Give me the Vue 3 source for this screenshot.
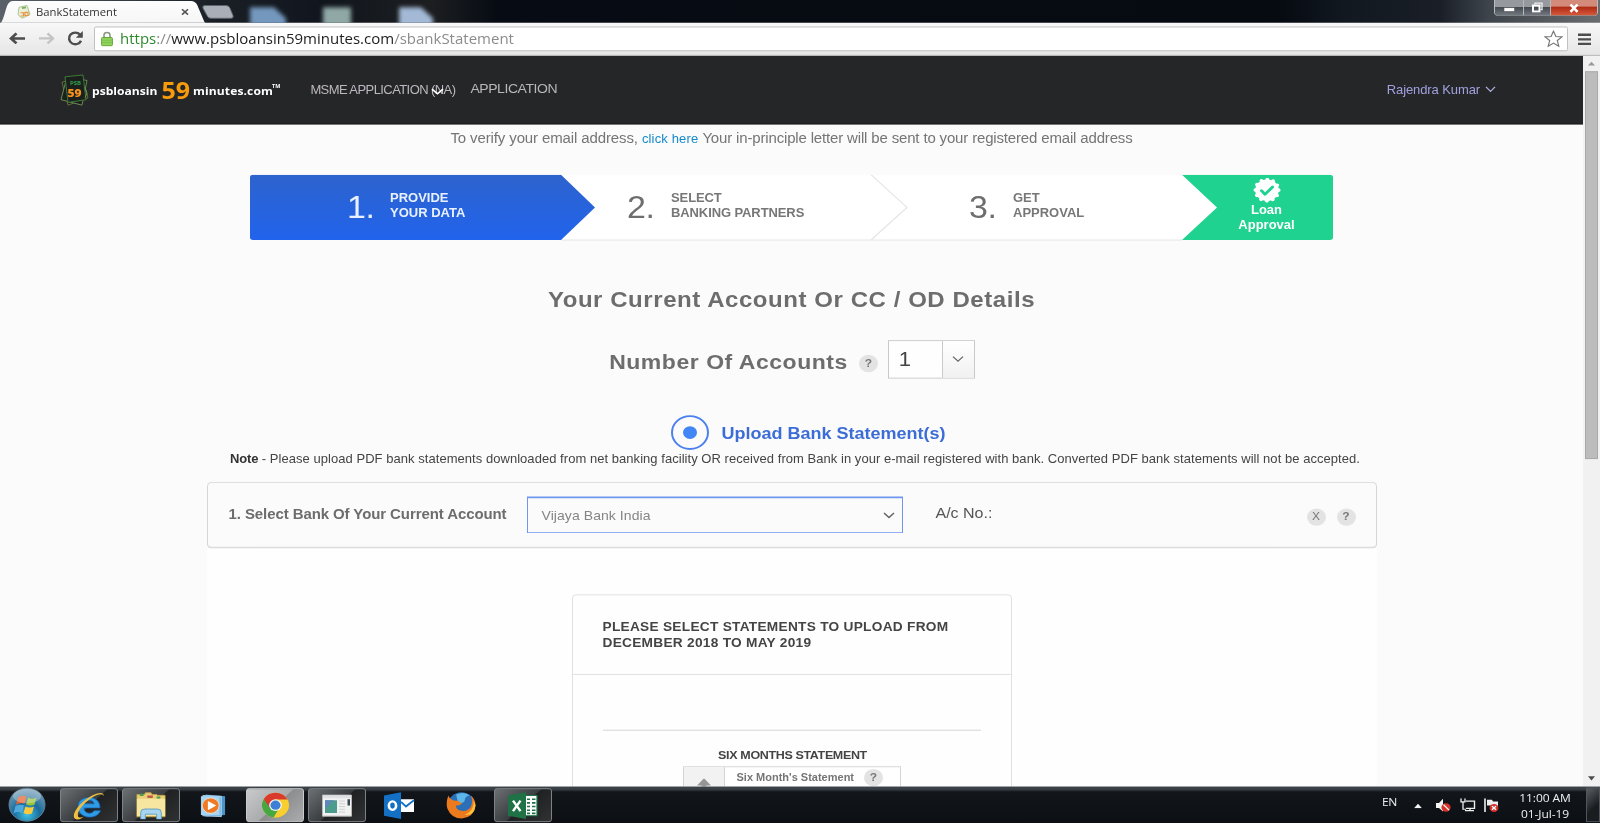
<script setup>
const pageTitle = 'BankStatement'
const note = '- Please upload PDF bank statements downloaded from net banking facility OR received from Bank in your e-mail registered with bank. Converted PDF bank statements will not be accepted.'
</script>

<template>
  <div class="screen">
    <div class="desktop">
      <header class="tabstrip">
        <svg class="strip-bg" width="1600" height="26" viewBox="0 0 1600 26">
          <defs>
            <linearGradient id="glass" x1="0" x2="1">
              <stop offset="0" stop-color="#5b6168" />
              <stop offset="0.13" stop-color="#1b2027" />
              <stop offset="0.2" stop-color="#11161e" />
              <stop offset="0.27" stop-color="#1c1e20" />
              <stop offset="0.31" stop-color="#070c14" />
              <stop offset="0.8" stop-color="#060b12" />
              <stop offset="0.84" stop-color="#121820" />
              <stop offset="0.9" stop-color="#1a1f27" />
              <stop offset="0.93" stop-color="#3e444b" />
              <stop offset="1" stop-color="#6a6d70" />
            </linearGradient>
            <linearGradient id="tabfill" x1="0" x2="0" y1="0" y2="1">
              <stop offset="0" stop-color="#fdfdfd" />
              <stop offset="1" stop-color="#f6f6f6" />
            </linearGradient>
            <filter id="frost" x="-30%" y="-30%" width="160%" height="160%"><feGaussianBlur stdDeviation="2.2" /></filter>
          </defs>
          <rect width="1600" height="26" fill="url(#glass)" />
          <g filter="url(#frost)">
            <path d="M250 8h24l12 12v10h-36z" fill="#7397bd" />
            <path d="M323 8h28v22h-28z" fill="#8fa8a6" />
            <path d="M399 8h22l12 12v10h-34z" fill="#a3b9d6" />
          </g>
          <path d="M0 26C4 23 6 5 9 3q1-2 4-2h178q4 0 6 4l7 18q1 3 5 3z" fill="url(#tabfill)" />
          <path d="M205 6h21q3 0 4 3l3 8q1 3-2 3h-20q-3 0-4-3l-4-8q-1-3 2-3z" fill="#a9aeb7" stroke="#5e656e" />
        </svg>
        <svg class="favicon" width="14" height="16" viewBox="0 0 14 16">
          <path d="M2 3l8-2 3 10-8 4-4-4z" fill="#e9efd9" stroke="#a9c28e" />
          <path d="M5 4l4-1" stroke="#7fae62" stroke-width="2" />
          <path d="M3.500 9h3v3.500h-3M8 8.500h3V12H8z" fill="none" stroke="#e89442" stroke-width="1.200" />
        </svg>
        <span class="tab-title">{{ pageTitle }}</span>
        <svg class="tab-close" width="8" height="8" viewBox="0 0 8 8"><path d="M1 1l6 6M7 1L1 7" stroke="#555" stroke-width="1.600" /></svg>
        <div class="win-controls">
          <span class="wc"><svg width="14" height="12" viewBox="0 0 14 12"><rect x="2" y="5.500" width="10.500" height="4" fill="#fff" stroke="#555" stroke-width=".6" /></svg></span>
          <span class="wc mid"><svg width="14" height="13" viewBox="0 0 14 13"><path d="M5 3V1.500h7v7h-1.500" fill="none" stroke="#eee" stroke-width="1.300" /><rect x="3" y="4" width="6.500" height="6.500" fill="none" stroke="#fff" stroke-width="2" /></svg></span>
          <span class="wc close"><svg width="14" height="12" viewBox="0 0 14 12"><path d="M3.500 2l7 8M10.500 2l-7 8" stroke="#fff" stroke-width="2.600" /></svg></span>
        </div>
      </header>

      <div class="toolbar">
        <svg class="nav back" width="17" height="14" viewBox="0 0 17 14"><path d="M7.500 1.500L2 7l5.500 5.500M2 7h14" fill="none" stroke="#4d4d4d" stroke-width="2.800" /></svg>
        <svg class="nav fwd" width="17" height="14" viewBox="0 0 17 14"><path d="M9.500 1.500L15 7l-5.500 5.500M15 7H1" fill="none" stroke="#c4c4c4" stroke-width="2.400" /></svg>
        <svg class="nav reload" width="17" height="18" viewBox="0 0 17 18"><path d="M14 11.500A6.200 6.400 0 1 1 13 4.800" fill="none" stroke="#4d4d4d" stroke-width="2.500" /><path d="M15.800 1v7.200H8.800z" fill="#4d4d4d" /></svg>
        <div class="omnibox">
          <svg class="lock" width="12" height="17" viewBox="0 0 12 17">
            <path d="M3 8V4.500a3 3 0 0 1 6 0V8" fill="none" stroke="#8a9a80" stroke-width="1.600" />
            <rect x=".6" y="7" width="10.800" height="9" rx="1" fill="#8fd35c" stroke="#5fa336" />
            <path d="M1.500 10h9M1.500 12.500h9" stroke="#7cc14b" />
          </svg>
          <span class="url"><span class="scheme">https</span><span class="dim">://</span>www.psbloansin59minutes.com<span class="dim">/sbankStatement</span></span>
          <svg class="star" width="19" height="19" viewBox="0 0 19 19"><path d="M9.500 1l2.400 5.900 6.100.4-4.700 4 1.500 6.200-5.300-3.400-5.300 3.400 1.500-6.200-4.700-4 6.100-.4z" fill="#fff" stroke="#777" stroke-width="1.200" /></svg>
        </div>
        <svg class="menu" width="13" height="14" viewBox="0 0 13 14"><path d="M0 2h13M0 7h13M0 12h13" stroke="#4c4c4c" stroke-width="2.600" /></svg>
      </div>

      <div class="viewport">
        <main class="page">
          <div class="site-header">
            <svg class="logo-mark" width="30" height="36" viewBox="0 0 30 36">
              <g fill="#1c201d" stroke="#6f8d57">
                <path d="M2 9l20-7 6 24-20 8z" stroke="#6d7048" />
                <path d="M1 28L7 3l20 4-5 27z" />
                <path d="M5 3l18-2 3 27-18 3z" stroke="#3f7d3a" />
              </g>
              <text x="10" y="11.500" class="mark-psb">PSB</text>
              <text x="7.500" y="25" class="mark-num">59</text>
              <path d="M25 15l2 6-2 5" fill="none" stroke="#6c9a4c" />
            </svg>
            <span class="brand">psbloansin</span><span class="brand-num">59</span><span class="brand last">minutes.com</span><span class="tm">TM</span>
            <div class="menu-msme">MSME APPLICATION (NA)
              <svg class="msme-caret" width="13" height="8" viewBox="0 0 13 8"><path d="M1 1.500l5.500 5L12 1.500" fill="none" stroke="#fff" stroke-width="1.700" /></svg>
            </div>
            <span class="menu-app">APPLICATION</span>
            <span class="user">Rajendra Kumar</span>
            <svg class="user-caret" width="11" height="8" viewBox="0 0 11 8"><path d="M1 1l4.500 5L10 1" fill="none" stroke="#aeb0e0" stroke-width="1.300" /></svg>
          </div>

          <p class="verify">To verify your email address, <a class="verify-link">click here</a> <span class="verify-tail">Your in-principle letter will be sent to your registered email address</span></p>

          <section class="steps">
            <svg class="steps-bg" width="1083" height="73" viewBox="0 0 1083 73">
              <defs>
                <linearGradient id="blue" x1="0" x2="0" y1="0" y2="1">
                  <stop offset="0" stop-color="#2d63cd" />
                  <stop offset="1" stop-color="#2163ec" />
                </linearGradient>
              </defs>
              <rect width="1083" height="71.500" rx="3" fill="#fff" />
              <path d="M311 71.500h621" stroke="#e4e4e4" />
              <path d="M621 0l36 35.800-36 35.700" fill="none" stroke="#e6e6e6" stroke-width="1.300" />
              <path d="M3 0h308l34 35.800-34 35.700H3q-3 0-3-3V3q0-3 3-3z" fill="url(#blue)" />
              <path d="M932 0h148q3 0 3 3v65.500q0 3-3 3H932l35-35.700z" fill="#20d290" />
            </svg>
            <div class="step active s1"><span class="num">1.</span><span>PROVIDE<br />YOUR DATA</span></div>
            <div class="step s2"><span class="num">2.</span><span>SELECT<br />BANKING PARTNERS</span></div>
            <div class="step s3"><span class="num">3.</span><span>GET<br />APPROVAL</span></div>
            <div class="approval">
              <svg width="28" height="28" viewBox="-14 -14 28 28">
                <circle r="11.800" fill="#fff" />
                <circle r="11.600" fill="none" stroke="#fff" stroke-width="4" stroke-dasharray="0 6.074" stroke-linecap="round" />
                <path d="M-5.500 .5l3.500 4 7.500-8" fill="none" stroke="#20d290" stroke-width="3" stroke-linecap="round" stroke-linejoin="round" />
              </svg>
              <span>Loan<br />Approval</span>
            </div>
          </section>

          <h1>Your Current Account Or CC / OD Details</h1>

          <div class="count-row">
            <h2>Number Of Accounts</h2>
            <span class="hint count-hint">?</span>
            <div class="count-select">
              <span class="count-value">1</span>
              <span class="count-arrow"><svg width="12" height="8" viewBox="0 0 12 8"><path d="M1 1l5 5 5-5" fill="none" stroke="#666" stroke-width="1.300" /></svg></span>
            </div>
          </div>

          <div class="upload-row">
            <span class="radio"><i></i></span>
            <span class="upload-label">Upload Bank Statement(s)</span>
          </div>
          <p class="note"><b>Note</b> {{ note }}</p>

          <section class="bank-bar">
            <span class="bank-label">1. Select Bank Of Your Current Account</span>
            <div class="bank-select">
              <span>Vijaya Bank India</span>
              <svg width="12" height="8" viewBox="0 0 12 8"><path d="M1 1l5 5 5-5" fill="none" stroke="#666" stroke-width="1.500" /></svg>
            </div>
            <span class="ac">A/c No.:</span>
            <span class="hint x-hint">X</span>
            <span class="hint bar-hint">?</span>
          </section>

          <section class="upload-area">
            <div class="card">
              <div class="card-head">PLEASE SELECT STATEMENTS TO UPLOAD FROM<br />DECEMBER 2018 TO MAY 2019</div>
              <div class="card-body">
                <hr />
                <h3>SIX MONTHS STATEMENT</h3>
                <div class="file-box">
                  <span class="file-icon"><svg width="14" height="20" viewBox="0 0 14 20"><path d="M7 0l7 8H9.500v12h-5V8H0z" fill="#969696" /></svg></span>
                  <span class="file-label">Six Month's Statement</span>
                  <span class="hint file-hint">?</span>
                </div>
              </div>
            </div>
          </section>
        </main>

        <aside class="scrollbar">
          <svg width="17" height="17" viewBox="0 0 17 17"><path d="M8.500 6.500l3.500 4H5z" fill="#9a9a9a" /></svg>
          <div class="thumb"></div>
          <svg width="17" height="17" viewBox="0 0 17 17"><path d="M8.500 10.500L5 6h7z" fill="#4d4d4d" /></svg>
        </aside>
      </div>

      <footer class="taskbar">
        <svg class="start" width="54" height="40" viewBox="0 0 54 40">
          <defs>
            <radialGradient id="orb" cx=".5" cy=".8" r=".8">
              <stop offset="0" stop-color="#3fc3e6" />
              <stop offset=".45" stop-color="#1b6c9c" />
              <stop offset="1" stop-color="#7fa0b8" />
            </radialGradient>
          </defs>
          <circle cx="27" cy="20" r="18" fill="url(#orb)" stroke="#5e7f92" />
          <path d="M18 12q5-3 8.500-1l-2 8q-4-2-8.500 1z" fill="#e8602c" />
          <path d="M28 12q4 3 8.500 0l-2 8q-4.500 2-8.500-.5z" fill="#9bc43a" />
          <path d="M15.500 21.500q4.500-2.500 8.500-.5l-2 8q-4-2.500-8.500 .5z" fill="#4fa9dd" />
          <path d="M25.500 22q4 2 8.500 0l-2 7.500q-4.500 2-8.500-.5z" fill="#fbc93b" />
          <ellipse cx="27" cy="10.500" rx="14" ry="8" fill="#fff" opacity=".28" />
        </svg>

        <span class="task framed">
          <svg width="34" height="32" viewBox="0 0 34 32">
            <path d="M28 18.500H12c0 6.500 8 7.500 10 3h6.500C25 32 6 31 6 17 6 4 28.500 3 28 18.500zM12 14h10c-.5-5-9-5-10 0z" fill="#2f9be6" stroke="#1668b4" stroke-width=".8" />
            <path d="M32 6c0-8-13-2-20 5C3 19-1 29 4 31c3 1 6-1 8-3-3 1.500-5 1.500-6-.5C4.500 23 11 14 19 8c6-4.500 12-6 13-2z" fill="#f0bf40" />
          </svg>
        </span>
        <span class="task framed">
          <svg width="34" height="30" viewBox="0 0 34 32">
            <path d="M2 6V3h8l1-2h6l1 2h5l1 1h8v25H2z" fill="#e8cf76" stroke="#c2a347" />
            <path d="M2 8h30v20H2z" fill="#f6e6a0" />
            <path d="M5 3.500h4M14 6h4M23 6.500h4" stroke="#4d9b4f" stroke-width="2.500" />
            <path d="M13 5.500h6" stroke="#c9524a" stroke-width="2.500" />
            <path d="M6 32v-8q0-4 4-4h14q4 0 4 4v8h-5v-6H11v6z" fill="#a7d4ee" stroke="#5f9cc4" />
          </svg>
        </span>
        <span class="task">
          <svg width="28" height="26" viewBox="0 0 28 28">
            <path d="M6 1l21 2v22l-21 2z" fill="#4c93c8" />
            <path d="M3 2l20 1v24L3 26z" fill="#79b9e4" stroke="#c2e2f5" stroke-width=".8" />
            <path d="M1 3h20v22H1z" fill="#a8d4ef" />
            <circle cx="11.500" cy="14" r="9" fill="#f07a23" stroke="#fff" stroke-width=".6" />
            <path d="M8.500 8.500v11l9-5.500z" fill="#fff" />
          </svg>
        </span>
        <span class="task framed lit">
          <svg width="29" height="29" viewBox="0 0 30 30">
            <circle cx="15" cy="15" r="14" fill="#f9cf2f" />
            <path d="M15 15L2.900 8A14 14 0 0 0 13 28.900L19 18z" fill="#46a843" />
            <path d="M15 8.500h12.400q-4-7.500-12.400-7.500Q7 1 2.900 8L9 18z" fill="#d93a2b" />
            <circle cx="15" cy="15" r="6.600" fill="#f3f3f3" />
            <circle cx="15" cy="15" r="5.200" fill="#3c7fd4" />
          </svg>
        </span>
        <span class="task framed">
          <svg width="30" height="26" viewBox="0 0 30 26">
            <path d="M.5 1.500h29v23H.5z" fill="#f2f2f2" stroke="#b9b9b9" />
            <path d="M1 2h28v3H1z" fill="#dfe2e4" />
            <path d="M3 7h12v14H3z" fill="#4c9c8d" />
            <path d="M3 7h9l-9 9z" fill="#5f86b8" />
            <path d="M17 8h6M17 11h6M17 14h6M17 17h6M17 20h6" stroke="#cfcfcf" />
            <path d="M25.500 6H28v7h-2.500z" fill="#3c4650" />
          </svg>
        </span>
        <span class="task">
          <svg width="32" height="30" viewBox="0 0 32 30">
            <path d="M16 8h15v14H16z" fill="#fff" /><path d="M18 11l5 5 8-7" fill="none" stroke="#1370c4" stroke-width="2" />
            <path d="M1 4l17-3.500v29L1 26z" fill="#1370c4" />
            <ellipse cx="9.500" cy="15" rx="3.600" ry="4.600" fill="none" stroke="#fff" stroke-width="2.600" />
          </svg>
        </span>
        <span class="task">
          <svg width="32" height="31" viewBox="0 0 32 32">
            <circle cx="16.500" cy="15" r="13.500" fill="#2a6fb8" />
            <path d="M11 4q7-4 14 1-5 1-5 5t-7 4z" fill="#5cb6e8" />
            <path d="M3 5q-3 8-1 15 4 11 15 11 12-1 14-14 0-8-5-12 3 7 0 13-4 6-11 4-5-2-4-6 3 1 6-2-4-4-8-3Q4 9 3 5z" fill="#ee7a1e" />
            <path d="M29 11q1 11-9 16 10 1 11-11z" fill="#fbc13a" />
          </svg>
        </span>
        <span class="task framed">
          <svg width="32" height="30" viewBox="0 0 32 30">
            <path d="M15 4h15v22H15z" fill="#fff" stroke="#1f7245" stroke-width="1.200" />
            <path d="M20 8h3M25 8h3.500M20 12h3M25 12h3.500M20 16h3M25 16h3.500M20 20h3M25 20h3.500M20 23.500h3M25 23.500h3.500" stroke="#1f7245" stroke-width="1.700" />
            <path d="M1 4l18-3.500v29L1 26z" fill="#1f7245" />
            <path d="M6 9.500l7.500 11.500M13.500 9.500L6 21" stroke="#fff" stroke-width="2.400" />
          </svg>
        </span>

        <div class="tray">
          <span class="lang">EN</span>
          <svg class="up" width="8" height="5" viewBox="0 0 8 5"><path d="M4 0l4 5H0z" fill="#f3f3f3" /></svg>
          <svg class="vol" width="16" height="16" viewBox="0 0 16 16">
            <path d="M0 5h3l4-4.500v14L3 10.500H0z" fill="#f5f5f5" />
            <circle cx="10" cy="10" r="4.600" fill="#d8322d" /><path d="M7.500 7l5.500 6" stroke="#fff" stroke-width="1.300" />
          </svg>
          <svg class="net" width="16" height="15" viewBox="0 0 16 15">
            <path d="M6 3h8.500v8H6M10 11v3M5 13.500h9" fill="none" stroke="#eee" stroke-width="1.400" />
            <path d="M1 0v4h4V0M3 4v8h3" fill="none" stroke="#eee" stroke-width="1.300" />
          </svg>
          <svg class="flag" width="16" height="16" viewBox="0 0 16 16">
            <path d="M1 0v15" stroke="#eee" stroke-width="1.600" /><path d="M3 1.500h5l1 2h5v6H8L7 8H3z" fill="#eee" />
            <circle cx="10" cy="10.500" r="4.400" fill="#d8322d" /><path d="M8 8.500l4 4M12 8.500l-4 4" stroke="#fff" stroke-width="1.400" />
          </svg>
          <div class="clock"><span>11:00 AM</span><span>01-Jul-19</span></div>
          <span class="show-desktop"></span>
        </div>
      </footer>
    </div>
  </div>
</template>

<style>
html, body { margin: 0; overflow: hidden; background: #000; }
</style>

<style scoped>
.screen { width: 1600px; height: 823px; overflow: hidden; }
/* 1600x900 desktop, flattened to the height of the window */
.desktop {
  width: 1600px; height: 900px; transform: scaleY(0.91444); transform-origin: 0 0;
  display: flex; flex-direction: column; overflow: hidden;
  font-family: "Liberation Sans", Arial, sans-serif; background: #fbfbfb;
}
svg { display: block; flex: none; }
p, h1, h2, h3 { margin: 0; }
span, div { white-space: nowrap; }

.tabstrip { position: relative; height: 25px; flex: none; display: flex; align-items: center; overflow: hidden; }
.strip-bg { position: absolute; left: 0; top: 0; }
.favicon { position: relative; margin-left: 17px; }
.tab-title { position: relative; width: 145px; margin-left: 5px; font: 11.3px/20px "Open Sans", sans-serif; color: #333; }
.tab-close { position: relative; }
.win-controls {
  position: relative; margin-left: auto; margin-right: 2px; align-self: flex-start; display: flex;
  width: 102px; height: 17px; border: 1px solid #b9bcbf; border-top: 0; border-radius: 0 0 5px 5px; overflow: hidden;
}
.wc { width: 28px; display: flex; align-items: center; justify-content: center; border-right: 1px solid #b5b8bb; background: linear-gradient(#969a9f 0 42%, #43484f 45%, #747a82); }
.wc.mid { width: 26px; }
.wc.close { flex: 1; border: 0; background: linear-gradient(#d48a7b 0 40%, #ae2a14 45%, #d85a3c); }

.toolbar { height: 35px; flex: none; display: flex; align-items: center; background: linear-gradient(#f8f8f8, #e6e6e6); border-bottom: 1px solid #9c9c9c; }
.nav { margin-bottom: 1px; }
.back { margin-left: 9px; }
.fwd { margin-left: 12px; }
.reload { margin-left: 12px; }
.omnibox { width: 1472px; height: 25px; margin-left: 10px; border: 1px solid #bdbdbd; border-radius: 2px; background: #fff; display: flex; align-items: center; }
.lock { margin-left: 6px; }
.url { flex: 1; margin: -2px 0 0 7px; font: 15px/22px "Open Sans", sans-serif; color: #222; }
.scheme { color: #2d8a2d; }
.dim { color: #8c8c8c; }
.star { margin-right: 4px; }
.menu { margin-left: 10px; }

.viewport { flex: 1; min-height: 0; display: flex; }
.page { width: 1583px; overflow: hidden; background: #fbfbfb; display: flex; flex-direction: column; align-items: center; }
.site-header { box-sizing: border-box; width: 1583px; height: 75px; flex: none; display: flex; align-items: center; background: #252628; border-bottom: 1px solid #191a1b; }
.logo-mark { margin: 2px 0 0 60px; }
.mark-psb { font: bold 6px "Open Sans", sans-serif; fill: #2fa04a; }
.mark-num { font: 800 12px "Open Sans", sans-serif; fill: #f8921e; }
.brand { margin-left: 2px; margin-top: 4px; font: bold 12.1px/20px "Open Sans", sans-serif; color: #fff; }
.brand.last { letter-spacing: .1px; }
.brand-num { margin: 0 1px 0 4px; font: bold 25px/30px "Open Sans", sans-serif; color: #f79a0c; }
.tm { margin: -8px 0 0 -1px; font: bold 5.500px/8px "Open Sans", sans-serif; color: #fff; }
.menu-msme { position: relative; width: 160px; margin-left: 30px; padding-top: 1px; font-size: 13px; line-height: 20px; letter-spacing: -.58px; color: #bdb8bf; }
.msme-caret { position: absolute; left: 121px; top: 8px; }
.menu-app { margin-top: -2px; font-size: 14px; letter-spacing: -.43px; color: #b9b6bc; }
.user { margin-left: auto; margin-top: 1px; font-size: 13px; letter-spacing: -.1px; color: #a2a1e0; }
.user-caret { margin: 0 87px 0 5px; }

.verify { margin-top: 5px; font-size: 15px; line-height: 20px; letter-spacing: -.12px; color: #757575; }
.verify-link { font-size: 13px; letter-spacing: .15px; color: #1489cc; }
.verify-tail { letter-spacing: -.16px; }

.steps { position: relative; width: 1083px; height: 71px; margin-top: 29px; flex: none; display: grid; grid-template-columns: 311px 310px 311px 151px; }
.steps-bg { position: absolute; left: 0; top: 0; }
.step { position: relative; display: flex; align-items: center; font-size: 13px; font-weight: bold; line-height: 16px; color: #777; padding-bottom: 3px; }
.step.active { color: #e9f1ff; }
.num { width: 44px; font-size: 34px; font-weight: normal; line-height: 40px; letter-spacing: -.5px; margin-top: 2px; color: #6e6e6e; }
.active .num { width: 43px; color: #e9f1ff; }
.s1 { padding-left: 97px; }
.s2 { padding-left: 66px; letter-spacing: -.1px; }
.s3 { padding-left: 98px; }
.approval { position: relative; padding: 3px 0 0 18px; display: flex; flex-direction: column; align-items: center; text-align: center; font-size: 13px; font-weight: bold; line-height: 16px; color: #fff; }

h1 { margin-top: 52px; font-size: 24px; line-height: 28px; letter-spacing: .56px; color: #6d6d6d; }
.count-row { display: flex; height: 42px; margin-top: 30px; padding-left: 1px; }
h2 { font-size: 23px; line-height: 38px; padding-top: 5px; letter-spacing: .528px; color: #6d6d6d; white-space: nowrap; }
.hint { flex: none; width: 19px; height: 19px; border-radius: 50%; background: #e3e3e3; color: #777; font-size: 12px; font-weight: bold; line-height: 19px; text-align: center; }
.count-hint { margin: 16px 10px 0 11px; }
.count-select { box-sizing: border-box; width: 87px; height: 42px; display: flex; border: 1px solid #c9c9c9; background: #fefefe; }
.count-value { width: 53px; box-sizing: border-box; padding-left: 10px; font-size: 22px; line-height: 39px; color: #444; }
.count-arrow { flex: 1; display: flex; align-items: center; justify-content: center; border-left: 1px solid #c9c9c9; background: linear-gradient(#fff, #f1f1f1); }

.upload-row { display: flex; align-items: center; height: 38px; margin-top: 40px; padding-left: 34px; }
.radio { box-sizing: border-box; width: 38px; height: 38px; border: 2px solid #4d80ef; border-radius: 50%; display: flex; align-items: center; justify-content: center; }
.radio i { width: 14px; height: 14px; border-radius: 50%; background: #4285f4; }
.upload-label { margin-left: 12px; padding-top: 2px; font-size: 18px; font-weight: bold; color: #3c6cd6; }
.note { padding-left: 7px; font-size: 13px; line-height: 20px; letter-spacing: .042px; color: #444; white-space: nowrap; }
.note b { letter-spacing: -.2px; color: #333; }

.bank-bar { box-sizing: border-box; width: 1170px; height: 73px; margin-top: 15px; flex: none; display: flex; align-items: center; border: 1px solid #d6d6d6; border-bottom: 2px solid #dcdcdc; border-radius: 5px; }
.bank-label { width: 297px; margin: -2px 0 0 21px; font-size: 15px; font-weight: bold; letter-spacing: -.09px; color: #6d6d6d; }
.bank-select { box-sizing: border-box; width: 376px; height: 40px; margin-left: 1px; padding: 0 7px 0 14px; display: flex; align-items: center; justify-content: space-between; border: 1px solid #6f96f0; border-top-width: 2px; font-size: 14px; letter-spacing: .067px; color: #858585; }
.ac { margin: -2px 0 0 33px; font-size: 16px; color: #555; }
.x-hint { margin: 4px 0 0 auto; font-size: 12px; font-weight: normal; }
.bar-hint { margin: 4px 20px 0 11px; }

.upload-area { width: 1170px; flex: 1; display: flex; justify-content: center; background: #fefefe; }
.card { box-sizing: border-box; width: 440px; height: 300px; margin-top: 50px; border: 1px solid #e0e0e0; border-radius: 4px; }
.card-head { box-sizing: border-box; height: 87px; padding: 26px 0 0 30px; border-bottom: 1px solid #dedede; font-size: 13.700px; font-weight: bold; line-height: 18px; letter-spacing: .27px; color: #444; }
.card-body { padding: 0 30px; display: flex; flex-direction: column; align-items: center; }
hr { width: 100%; height: 1px; margin: 60px 0 0; border: 0; background: #d2d2d2; }
h3 { margin-top: 17px; padding-left: 2px; font-size: 12.500px; line-height: 20px; letter-spacing: -.35px; color: #444; }
.file-box { box-sizing: border-box; width: 218px; height: 44px; margin-top: 2px; display: flex; border: 1px solid #d4d4d4; background: #fff; }
.file-icon { width: 41px; display: flex; justify-content: center; padding-top: 12px; box-sizing: border-box; border-right: 1px solid #d4d4d4; background: #f2f2f2; }
.file-label { margin-left: 12px; font-size: 11px; font-weight: bold; line-height: 23px; color: #757575; }
.file-hint { margin: 2px 0 0 10px; }

.scrollbar { width: 17px; display: flex; flex-direction: column; background: #f1f1f1; }
.thumb { box-sizing: border-box; width: 13px; height: 424px; margin: 0 2px auto; border: 1px solid #a8a8a8; background: #bcbcbc; }

.taskbar { box-sizing: border-box; height: 40px; flex: none; display: flex; align-items: center; background: linear-gradient(#5b666c 0 1px, #3a4147 1px 3px, #12161b 6px, #0c0f14); }
.start { margin-right: 6px; }
.task { box-sizing: border-box; width: 58px; height: 37px; margin: 1px 4px 0 0; display: flex; align-items: center; justify-content: center; }
.framed { border: 1px solid #83888c; border-radius: 3px; background: linear-gradient(135deg, #6d7073, #3a3d40 50%, #1f2123 52%, #2f3133); }
.lit { border-color: #d2d4d5; background: linear-gradient(135deg, #c9cacb, #a9abac 50%, #8b8d8f 52%, #aaacad); }
.tray { margin-left: auto; height: 40px; display: flex; align-items: center; color: #f0f0f0; font: 12px/16px "Open Sans", sans-serif; }
.lang { margin-top: -6px; letter-spacing: -.4px; }
.up { margin: 2px 0 0 17px; }
.vol { margin: 2px 0 0 14px; }
.net { margin: 1px 0 0 8px; }
.flag { margin: 2px 0 0 8px; }
.clock { width: 60px; margin: 1px 11px 0 15px; display: flex; flex-direction: column; align-items: center; line-height: 17px; letter-spacing: -.1px; }
.show-desktop { box-sizing: border-box; width: 14px; height: 38px; border: 1px solid #50565b; background: linear-gradient(135deg, #5a5f63, #1a1d20 60%); }
</style>
